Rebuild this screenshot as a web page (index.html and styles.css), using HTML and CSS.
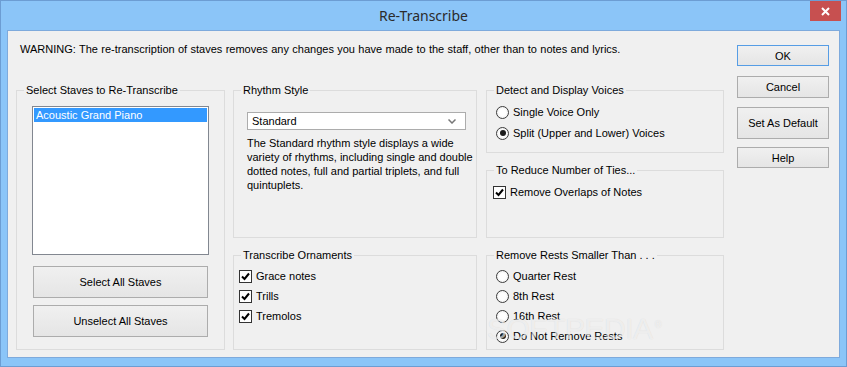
FILE: index.html
```html
<!DOCTYPE html>
<html>
<head>
<meta charset="UTF-8">
<title>Re-Transcribe</title>
<link rel="stylesheet" href="styles.css">
</head>
<body>
<div class="window">
    <div class="titlebar">
        <span></span>
        <div class="title">Re-Transcribe</div>
        <button class="close"><svg width="9" height="9" viewBox="0 0 9 9"><path d="M1 1 L8 8 M8 1 L1 8" stroke="#fff" stroke-width="2"/></svg></button>
    </div>

    <div class="content">
        <div class="main">
            <p class="warning">WARNING: The re-transcription of staves removes any changes you have made to the staff, other than to notes and lyrics.</p>

            <div class="groups">
                <div class="group staves">
                    <div class="group_title">Select Staves to Re-Transcribe</div>
                    <ul class="listbox">
                        <li class="selected">Acoustic Grand Piano</li>
                    </ul>
                    <button class="btn">Select All Staves</button>
                    <button class="btn">Unselect All Staves</button>
                </div>

                <div class="column middle">
                    <div class="group rhythm">
                        <div class="group_title">Rhythm Style</div>
                        <div class="select">
                            <span>Standard</span>
                            <svg width="8" height="5" viewBox="0 0 8 5"><path d="M0.5 0.5 L4 4 L7.5 0.5" stroke="#777" stroke-width="1.5" fill="none"/></svg>
                        </div>
                        <p class="description">The Standard rhythm style displays a wide<br>variety of rhythms, including single and double<br>dotted notes, full and partial triplets, and full<br>quintuplets.</p>
                    </div>

                    <div class="group ornaments">
                        <div class="group_title">Transcribe Ornaments</div>
                        <label class="option"><span class="check"><svg width="11" height="11" viewBox="0 0 11 11"><path d="M2 5.5 L4.5 8 L9 2.5" stroke="#000" stroke-width="2" fill="none"/></svg></span>Grace notes</label>
                        <label class="option"><span class="check"><svg width="11" height="11" viewBox="0 0 11 11"><path d="M2 5.5 L4.5 8 L9 2.5" stroke="#000" stroke-width="2" fill="none"/></svg></span>Trills</label>
                        <label class="option"><span class="check"><svg width="11" height="11" viewBox="0 0 11 11"><path d="M2 5.5 L4.5 8 L9 2.5" stroke="#000" stroke-width="2" fill="none"/></svg></span>Tremolos</label>
                    </div>
                </div>

                <div class="column right">
                    <div class="group voices">
                        <div class="group_title">Detect and Display Voices</div>
                        <label class="option"><span class="radio"></span>Single Voice Only</label>
                        <label class="option"><span class="radio on"></span>Split (Upper and Lower) Voices</label>
                    </div>

                    <div class="group ties">
                        <div class="group_title">To Reduce Number of Ties...</div>
                        <label class="option"><span class="check"><svg width="11" height="11" viewBox="0 0 11 11"><path d="M2 5.5 L4.5 8 L9 2.5" stroke="#000" stroke-width="2" fill="none"/></svg></span>Remove Overlaps of Notes</label>
                    </div>

                    <div class="group rests">
                        <div class="group_title">Remove Rests Smaller Than . . .</div>
                        <label class="option"><span class="radio"></span>Quarter Rest</label>
                        <label class="option"><span class="radio"></span>8th Rest</label>
                        <label class="option"><span class="radio"></span>16th Rest</label>
                        <label class="option"><span class="radio on"></span>Do Not Remove Rests</label>
                    </div>
                </div>
            </div>
        </div>

        <div class="side">
            <button class="btn default ok">OK</button>
            <button class="btn cancel">Cancel</button>
            <button class="btn set_default">Set As Default</button>
            <button class="btn help">Help</button>
        </div>
    </div>

    <div class="watermark">SOFTPEDIA<sup>®</sup></div>
</div>
</body>
</html>
```

FILE: styles.css
```css
body {
    margin: 0;
    font-family: "Liberation Sans", Arial, sans-serif;
    font-size: 11px;
    color: #000;
}

* {
    box-sizing: border-box;
}

.window {
    position: relative;
    width: 847px;
    height: 367px;
    border: 1px solid #6c9dd3;
    background: #8bc5f8;
    padding: 0 6px 8px 6px;
    display: flex;
    flex-direction: column;
}

.titlebar {
    height: 29px;
    display: grid;
    grid-template-columns: 31px 1fr 31px;
    align-items: start;
}

.titlebar .title {
    text-align: center;
    font-family: "Noto Sans", sans-serif;
    font-size: 14px;
    line-height: 29px;
    color: #2b2b2b;
}

.titlebar .close {
    width: 31px;
    height: 20px;
    margin-left: 1px;
    border: none;
    padding: 0;
    background: #c75050;
    display: flex;
    align-items: center;
    justify-content: center;
}

.content {
    flex: 1;
    border: 1px solid #7eaadc;
    background: #f0f0f0;
    display: flex;
    padding: 11px 10px 0 8px;
}

.main {
    width: 708px;
}

.warning {
    margin: 0 0 0 4px;
    line-height: 14px;
    word-spacing: 0.3px;
}

.groups {
    display: flex;
    align-items: flex-start;
    margin-top: 34px;
}

.column {
    display: flex;
    flex-direction: column;
    gap: 17px;
}

.middle {
    width: 244px;
    margin-left: 8px;
}

.right {
    width: 238px;
    margin-left: 9px;
}

/* --pad is the inset of the group's controls */
.group {
    border: 1px solid #dcdcdc;
    padding-left: var(--pad);
}

.group .group_title {
    width: fit-content;
    margin: -8px 0 0 calc(7px - var(--pad));
    padding: 0 2px;
    background: #f0f0f0;
    line-height: 14px;
}

.staves {
    --pad: 15px;
    width: 209px;
    height: 260px;
}

.listbox {
    list-style: none;
    margin: 9px 0 0 0;
    padding: 1px;
    width: 177px;
    height: 149px;
    border: 1px solid #828790;
    background: #fff;
}

.listbox .selected {
    background: #3399ff;
    color: #fff;
    line-height: 14px;
    padding-left: 2px;
}

.btn {
    display: block;
    padding: 0;
    font: inherit;
    color: #000;
    border: 1px solid #acacac;
    background: linear-gradient(#f0f0f0, #e5e5e5);
}

.staves .btn {
    width: 175px;
    height: 32px;
    margin: 7px 0 0 1px;
}

.staves .listbox + .btn {
    margin-top: 11px;
}

.rhythm {
    --pad: 13px;
    height: 148px;
}

.rhythm .select {
    width: 219px;
    height: 18px;
    margin-top: 15px;
    border: 1px solid #acacac;
    background: #fff;
    display: flex;
    align-items: center;
    justify-content: space-between;
    padding: 0 9px 0 4px;
}

.rhythm .description {
    margin: 6px 0 0 0;
    line-height: 14px;
    white-space: nowrap;
}

.ornaments {
    --pad: 5px;
    height: 95px;
}

.voices {
    --pad: 9px;
    height: 63px;
}

.voices .option + .option {
    margin-top: 1px;
}

.ties {
    --pad: 6px;
    height: 68px;
}

.rests {
    --pad: 9px;
    height: 95px;
}

.ornaments .group_title + .option,
.rests .group_title + .option {
    margin-top: 4px;
}

.voices .group_title + .option,
.ties .group_title + .option {
    margin-top: 5px;
}

.option {
    display: flex;
    align-items: center;
    height: 20px;
    gap: 4px;
}

.check {
    width: 13px;
    height: 13px;
    border: 1px solid #333;
    background: #fff;
    display: flex;
    align-items: center;
    justify-content: center;
}

.radio {
    width: 13px;
    height: 13px;
    border-radius: 50%;
    border: 1px solid #3c3c3c;
    background: radial-gradient(circle, #fff 40%, #e6e6e6 100%);
    display: flex;
    align-items: center;
    justify-content: center;
}

.radio.on:after {
    content: '';
    width: 6px;
    height: 6px;
    border-radius: 50%;
    background: #1c1c1c;
}

.side {
    width: 92px;
    margin-left: 13px;
    padding-top: 3px;
}

.side .btn {
    width: 92px;
}

.side .ok {
    height: 21px;
    border-color: #569de5;
}

.side .cancel {
    height: 22px;
    margin-top: 10px;
}

.side .set_default {
    height: 32px;
    margin-top: 9px;
}

.side .help {
    height: 21px;
    margin-top: 8px;
}

.watermark {
    position: absolute;
    left: 486px;
    top: 311px;
    font-size: 30px;
    letter-spacing: -0.5px;
    color: rgba(255, 255, 255, 0.6);
    text-shadow: 0 0 1px rgba(0, 0, 0, 0.12);
    pointer-events: none;
}

.watermark sup {
    font-size: 10px;
    margin-left: 2px;
}
```
